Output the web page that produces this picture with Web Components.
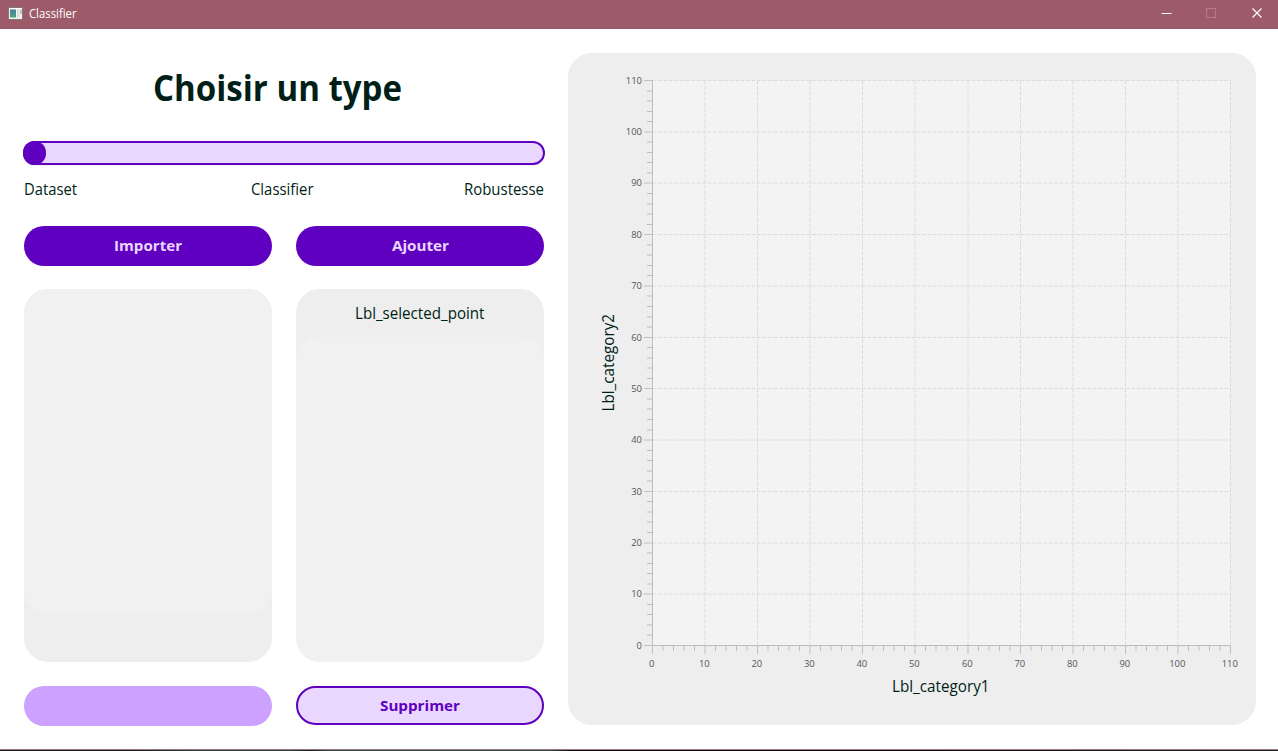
<!DOCTYPE html>
<html lang="fr">
<head>
<meta charset="utf-8">
<title>Classifier</title>
<style>
html,body{margin:0;height:100%;overflow:hidden;background:#fff}
body{font-family:"Open Sans","Noto Sans",sans-serif;color:#001f18}
</style>
</head>
<body>
<classifier-app></classifier-app>
<script>
const define = (name, html, setup) => customElements.define(name, class extends HTMLElement {
  connectedCallback() {
    if (this.shadowRoot) return;
    const t = document.createElement('template');
    t.innerHTML = html;
    this.attachShadow({mode: 'open'}).append(t.content.cloneNode(true));
    if (setup) setup(this, this.shadowRoot);
  }
});

/* Label whose glyphs are condensed or widened to a given width */
define('fit-label', `<style>
:host{display:inline-block;white-space:nowrap;flex:none}
span{display:inline-block;transform-origin:0 50%}
</style><span><slot></slot></span>`, (el, root) => {
  const w = +el.getAttribute('width'), s = root.querySelector('span');
  const natural = s.getBoundingClientRect().width;
  if (natural) s.style.transform = `scaleX(${w / natural})`;
  el.style.width = w + 'px';
});

define('title-bar', `<style>
:host{display:flex;flex:none;height:29px;background:#9d5b69;color:#fff;align-items:center;box-sizing:border-box;padding-left:8px;font-size:12px;line-height:28px}
.icon{width:15px;height:13px;margin:0 6px 3px 0}
.name{flex:1;height:29px}
.controls{display:flex;height:29px}
.controls svg{width:45.5px;height:29px}
</style>
<svg class="icon" viewBox="0 0 15 13"><defs><linearGradient id="g" x2="0" y2="1"><stop stop-color="#4b7d9f"/><stop offset="1" stop-color="#4fa583"/></linearGradient></defs>
<rect x=".5" y=".5" width="14" height="12" fill="#f2f2ef" stroke="#86767f"/><path d="M1 1.5h13" stroke="#fff"/><rect x="2" y="2.5" width="6" height="8" fill="url(#g)"/><rect x="9" y="2.5" width="2.5" height="8" fill="#dededb"/><path d="M12 2.5h2V7h-2z" fill="#a9cfc8"/></svg>
<div class="name"><fit-label width="47.5"><slot></slot></fit-label></div>
<div class="controls">
<svg viewBox="0 0 45.5 29"><path d="M19.5 13.5h10" stroke="#fff"/></svg>
<svg viewBox="0 0 45.5 29"><rect x="19.5" y="8.5" width="9" height="9" fill="none" stroke="#b57b87"/></svg>
<svg viewBox="0 0 45.5 29"><path d="M19.5 8.5l9 9m0-9l-9 9" stroke="#fff" stroke-width="1.2"/></svg>
</div>`);

define('type-slider', `<style>
:host{display:block}
.track{margin:0 -1px;height:24px;box-sizing:border-box;border:2px solid #5f00c0;border-radius:12px;background:#ead7ff;box-shadow:0 1px 1px #0000000d}
.thumb{width:23px;height:24px;border-radius:12px;background:#5f00c0;margin:-2px}
.labels{display:flex;justify-content:space-between;font-size:15.4px;line-height:24px;padding-top:12.6px;height:23.4px}
</style><div class="track"><div class="thumb"></div></div>
<div class="labels"><fit-label width="53">Dataset</fit-label><fit-label width="62.5" style="margin-left:23.5px">Classifier</fit-label><fit-label width="80">Robustesse</fit-label></div>`);

define('pill-button', `<style>
:host{display:flex;height:40px;box-sizing:border-box;border-radius:20px;justify-content:center;align-items:center;background:#5f00c0;color:#ead7ff;font-weight:700;font-size:14.8px;line-height:20px;padding-bottom:2px}
:host([kind=outline]){background:#ead7ff;color:#5f00c0;border:2px solid #5f00c0;height:39px;padding:0}
:host([kind=muted]){background:#cca1ff}
</style><slot></slot>`);

define('data-card', `<style>
:host{display:flex;flex-direction:column;background:#eee;border-radius:24px;overflow:hidden}
.head{height:48.5px;text-align:center;font-size:15.4px;line-height:49px}
.list{flex:1;background:#f1f1f1;border-radius:24px}
:host([foot]) .head{display:none}
:host([foot]) .list{margin-bottom:48px}
</style><div class="head"><slot></slot></div><div class="list"></div>`);

define('scatter-chart', `<style>
:host{display:block;background:#eee;border-radius:24px}
svg{display:block;width:688px;height:672px}
.tick{font-size:9.5px;fill:#555}
.axis{font-size:15.4px;fill:#001f18}
</style><svg viewBox="568 53 688 672"></svg>`, (el, root) => {
  const svg = root.querySelector('svg');
  const x0 = 652.5, x1 = 1230.5, y0 = 645.5, y1 = 80.5;
  let s = `<rect x="${x0}" y="${y1}" width="${x1 - x0}" height="${y0 - y1}" fill="#f3f3f3"/>`;
  const snap = v => Math.round(v * 2) / 2;
  const line = (a, b, c, d, extra) => `<path d="M${a} ${b}L${c} ${d}" ${extra}/>`;
  const dash = 'stroke="#dcdcdc" stroke-dasharray="4 1.5"';
  for (let v = 10; v <= 110; v += 10) {
    const x = snap(x0 + (x1 - x0) * v / 110), y = snap(y0 + (y1 - y0) * v / 110);
    s += line(x, y0, x, y1, dash) + line(x0, y, x1, y, dash);
  }
  for (let v = 0; v <= 110; v += 2) {
    const major = v % 10 === 0, n = major ? 8.5 : 5.5;
    const x = snap(x0 + (x1 - x0) * v / 110), y = snap(y0 + (y1 - y0) * v / 110);
    s += line(x, y0, x, y0 + n, 'stroke="#c0c0c0"') + line(x0 - n, y, x0, y, 'stroke="#c0c0c0"');
    if (major) {
      const w = 5.4 * String(v).length;
      const fit = `textLength="${w}" lengthAdjust="spacingAndGlyphs"`;
      s += `<text class="tick" x="${x - .7 - w / 2}" y="667" ${fit}>${v}</text>`;
      s += `<text class="tick" x="${642 - w}" y="${y + 3.4}" ${fit}>${v}</text>`;
    }
  }
  s += `<path d="M${x0} ${y1 - .5}V${y0}H${x1 + .5}" fill="none" stroke="#bdbdbd"/>`;
  s += `<text class="axis" x="892" y="692" textLength="97.5" lengthAdjust="spacingAndGlyphs">Lbl_category1</text>`;
  s += `<text class="axis" transform="translate(614 411.5) rotate(-90)" textLength="97.5" lengthAdjust="spacingAndGlyphs">Lbl_category2</text>`;
  svg.innerHTML = s;
});

define('classifier-app', `<style>
:host{display:flex;flex-direction:column;height:751px;width:1278px;background:#fff}
main{flex:none;height:720px;box-sizing:border-box;display:grid;grid-template-columns:520px 688px;column-gap:24px;padding:24px 22px 24px 24px}
.side{display:flex;flex-direction:column}
h1{margin:0;height:88px;padding-left:129px;font-size:35px;line-height:70px;font-weight:700}
.grid{display:grid;grid-template-columns:248px 248px;column-gap:24px;grid-template-rows:40px 374px 40px;margin-top:25px;row-gap:23px}
data-card{height:373px}
scatter-chart{height:672px}
footer{flex:none;height:1px;border-top:1px solid #a27883;background:linear-gradient(90deg,#101c1a 0 130px,#244039 200px 290px,#101c1a 310px,#2d4b43 330px 550px,#0c0f10 570px 900px,#17251f)}
</style>
<title-bar>Classifier</title-bar>
<main><div class="side">
<h1><fit-label width="249">Choisir un type</fit-label></h1>
<type-slider></type-slider>
<div class="grid">
<pill-button><fit-label width="68">Importer</fit-label></pill-button><pill-button><fit-label width="57">Ajouter</fit-label></pill-button>
<data-card foot></data-card><data-card><fit-label width="129.5">Lbl_selected_point</fit-label></data-card>
<pill-button kind="muted"></pill-button><pill-button kind="outline"><fit-label width="80">Supprimer</fit-label></pill-button>
</div></div>
<scatter-chart></scatter-chart></main>
<footer></footer>`);
</script>
</body>
</html>
